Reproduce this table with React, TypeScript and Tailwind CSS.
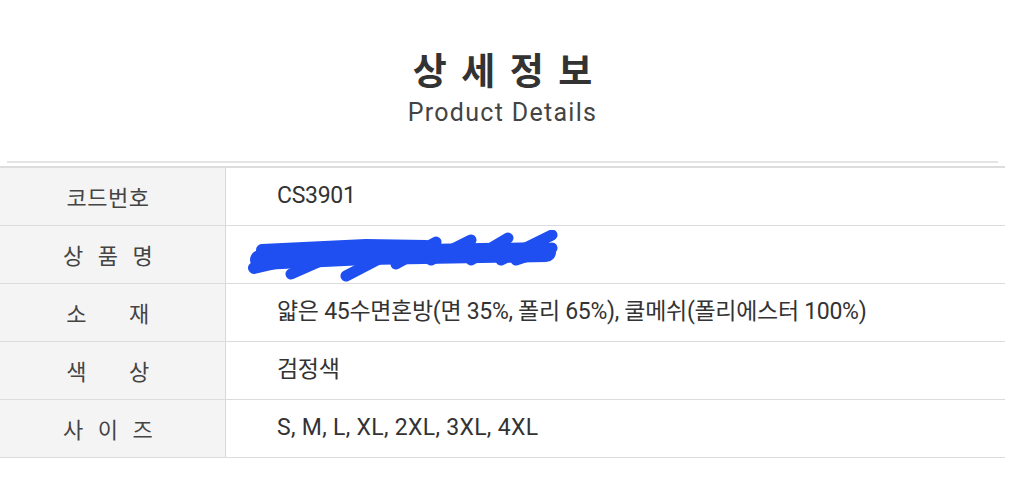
import React from 'react'

type Row = { label: string[]; gap: string; value: string; hidden?: boolean; track: string }

const rows: Row[] = [
  { label: ['코드번호'], gap: 'gap-0', value: 'CS3901', track: 'tracking-[-0.3px]' },
  { label: ['상', '품', '명'], gap: 'gap-[14px]', value: '', hidden: true, track: 'tracking-[-0.3px]' },
  { label: ['소', '재'], gap: 'gap-[42px]', value: '얇은 45수면혼방(면 35%, 폴리 65%), 쿨메쉬(폴리에스터 100%)', track: 'tracking-[-0.3px]' },
  { label: ['색', '상'], gap: 'gap-[42px]', value: '검정색', track: 'tracking-[-0.3px]' },
  { label: ['사', '이', '즈'], gap: 'gap-[14px]', value: 'S, M, L, XL, 2XL, 3XL, 4XL', track: 'tracking-[0.3px]' },
]

// blue marker scribble covering the product name
function Scribble() {
  return (
    <svg className="absolute left-[20px] top-[4px]" width="320" height="52" viewBox="0 0 320 52" fill="none">
      <g stroke="#1f4ff0" strokeLinecap="round" strokeLinejoin="round">
        <path d="M14 30 L120 25 L300 22" strokeWidth="20" />
        <path d="M8 38 L60 26 M16 20 L120 15 L180 16" strokeWidth="12" />
        <path d="M45 44 L95 22 M100 46 L150 20 M150 34 L190 12 M185 30 L225 10 M225 30 L262 8 M255 30 L306 5 M270 30 L306 18" strokeWidth="11" />
      </g>
    </svg>
  )
}

export default function App() {
  return (
    <main className="w-[1016px] h-[502px] bg-white pt-[46px] font-['Noto_Sans_CJK_KR',sans-serif] text-[#333]">
      <header className="flex w-[1005px] flex-col items-center">
        <h1 className="pl-[3px] text-[37px] font-bold leading-[46px] text-[#333] tracking-[3px]">상 세 정 보</h1>
        <p className="mt-[6px] font-['Roboto','Noto_Sans_CJK_KR',sans-serif] text-[25px] leading-[30px] tracking-[1.3px] text-[#444]">
          Product Details
        </p>
      </header>

      <div className="mt-[33px] ml-[7px] w-[991px] h-[2px] bg-[#e4e4e4]" />
      <div className="mt-[3px] w-[1005px] border-t-2 border-[#dddddd]">
        {rows.map((r, i) => (
          <div key={i} className="flex h-[58px] border-b border-[#dcdcdc]">
            <div className={`flex w-[226px] shrink-0 items-center justify-center pr-[9px] border-r border-[#d8d8d8] bg-[#f4f4f4] text-[22px] tracking-[0.5px] text-[#444] ${r.gap}`}>
              {r.label.map((c, j) => (
                <span key={j}>{c}</span>
              ))}
            </div>
            <div className={`relative flex flex-1 items-center pl-[51px] font-['Roboto','Noto_Sans_CJK_KR',sans-serif] text-[23px] text-[#333] ${r.track}`}>
              {r.hidden ? <Scribble /> : r.value}
            </div>
          </div>
        ))}
      </div>
    </main>
  )
}
